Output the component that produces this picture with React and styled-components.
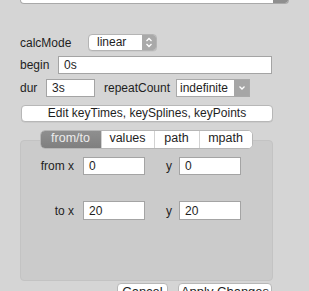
import React from 'react';
import styled, { createGlobalStyle } from 'styled-components';

const GlobalStyle = createGlobalStyle`
  html, body {
    margin: 0;
    padding: 0;
    background: #d5d5d5;
    font-family: "Liberation Sans", Arial, sans-serif;
    font-size: 12px;
    color: #1e1e1e;
    overflow: hidden;
  }
`;

const Page = styled.div`
  width: 309px;
  height: 291px;
  padding-left: 20px;
  box-sizing: border-box;
`;

const TopSelect = styled.div`
  display: flex;
  width: 269px;
  height: 4px;
  box-sizing: border-box;
  border: 1px solid #a9a9a9;
  border-top: none;
  border-radius: 0 0 5px 5px;
  background: #fff;
  overflow: hidden;
`;

const TopCap = styled.div`
  margin-left: auto;
  width: 15px;
  background: #8f8f8f;
`;

const Row = styled.div`
  display: flex;
  align-items: center;
  margin-top: ${(p) => p.$top || 0}px;
  height: ${(p) => p.$h || 18}px;
`;

const Label = styled.span`
  width: ${(p) => (p.$w ? `${p.$w}px` : 'auto')};
  margin-left: ${(p) => p.$before ?? 0}px;
  margin-right: ${(p) => p.$gap ?? 0}px;
  text-align: ${(p) => p.$align || 'left'};
  white-space: nowrap;
`;

const Input = styled.div`
  box-sizing: border-box;
  width: ${(p) => p.$w}px;
  height: ${(p) => p.$h || 18}px;
  border: 1px solid #a4a4a4;
  background: #fff;
  padding: 0 5px;
  display: flex;
  align-items: center;
  font-size: 12px;
`;

const PopUp = styled.div`
  box-sizing: border-box;
  width: 69px;
  height: 17px;
  display: flex;
  border: 1px solid #b4b4b4;
  border-radius: 4px;
  background: #fff;
  overflow: hidden;
  box-shadow: 0 0.5px 0 rgba(0, 0, 0, 0.08);
`;

const PopUpText = styled.span`
  flex: 1;
  padding-left: 8px;
  line-height: 15px;
`;

const Arrows = styled.div`
  width: 14px;
  background: #a9a9a9;
  display: flex;
  align-items: center;
  justify-content: center;
`;

const Combo = styled.div`
  box-sizing: border-box;
  width: 74px;
  height: 18px;
  display: flex;
  border: 1px solid #a9a9a9;
  background: #fff;
`;

const ComboText = styled.span`
  flex: 1;
  padding-left: 3px;
  line-height: 16px;
  white-space: nowrap;
  overflow: hidden;
`;

const ComboArrow = styled.div`
  width: 15px;
  flex-shrink: 0;
  background: #a6a6a6;
  display: flex;
  align-items: center;
  justify-content: center;
`;

const WideButton = styled.div`
  box-sizing: border-box;
  margin-top: 8px;
  width: 252px;
  margin-left: 1px;
  height: 17px;
  border: 1px solid #b7b7b7;
  border-radius: 4px;
  background: #fff;
  text-align: center;
  line-height: 15px;
  box-shadow: 0 0.5px 0 rgba(0, 0, 0, 0.1);
`;

const TabsBar = styled.div`
  position: relative;
  z-index: 1;
  margin-top: 8px;
  width: 253px;
  display: flex;
  justify-content: center;
`;

const Tabs = styled.div`
  display: flex;
  height: 17px;
  border: 1px solid #b6b6b6;
  border-radius: 5px;
  background: #fff;
  overflow: hidden;
  margin-left: -1px;
`;

const Tab = styled.div`
  box-sizing: border-box;
  width: ${(p) => p.$w}px;
  text-align: center;
  line-height: 15px;
  border-left: ${(p) => (p.$first ? 'none' : '1px solid #d2d2d2')};
  background: ${(p) => (p.$active ? 'linear-gradient(#8f8f8f, #7f7f7f)' : '#fff')};
  color: ${(p) => (p.$active ? '#ececec' : '#1e1e1e')};
  font-size: 12.5px;
`;

const GroupBox = styled.div`
  box-sizing: border-box;
  margin-top: -9px;
  width: 253px;
  height: 141px;
  border: 1px solid #c3c3c3;
  border-radius: 4px;
  background: #cbcbcb;
  padding-top: 16px;
`;

const Footer = styled.div`
  display: flex;
  justify-content: flex-end;
  gap: 10px;
  width: 252px;
  margin-top: 2px;
`;

const Button = styled.div`
  box-sizing: border-box;
  width: ${(p) => p.$w}px;
  height: 20px;
  border: 1px solid #b7b7b7;
  border-radius: 4px;
  background: #fff;
  text-align: center;
  line-height: 14px;
  padding-top: 1px;
  font-size: 13px;
`;

const StepperIcon = () => (
  <svg width="8" height="11" viewBox="0 0 8 11">
    <path d="M1.5 4 L4 1.5 L6.5 4 M1.5 7 L4 9.5 L6.5 7" fill="none" stroke="#fff" strokeWidth="1.3" />
  </svg>
);

const ChevronIcon = () => (
  <svg width="8" height="6" viewBox="0 0 8 6">
    <path d="M1.5 1.5 L4 4 L6.5 1.5" fill="none" stroke="#fff" strokeWidth="1.3" />
  </svg>
);

export default function App() {
  return (
    <Page>
      <GlobalStyle />
      <TopSelect>
        <TopCap />
      </TopSelect>

      <Row $top={30} $h={17}>
        <Label $w={68}>calcMode</Label>
        <PopUp>
          <PopUpText>linear</PopUpText>
          <Arrows>
            <StepperIcon />
          </Arrows>
        </PopUp>
      </Row>

      <Row $top={5}>
        <Label $w={38}>begin</Label>
        <Input $w={214}>0s</Input>
      </Row>

      <Row $top={5}>
        <Label $w={26}>dur</Label>
        <Input $w={49}>3s</Input>
        <Label $w={72} $before={9}>repeatCount</Label>
        <Combo>
          <ComboText>indefinite</ComboText>
          <ComboArrow>
            <ChevronIcon />
          </ComboArrow>
        </Combo>
      </Row>

      <WideButton>Edit keyTimes, keySplines, keyPoints</WideButton>

      <TabsBar>
        <Tabs>
          <Tab $w={60} $first $active>from/to</Tab>
          <Tab $w={53}>values</Tab>
          <Tab $w={45}>path</Tab>
          <Tab $w={53}>mpath</Tab>
        </Tabs>
      </TabsBar>

      <GroupBox>
        <Row>
          <Label $w={53} $gap={9} $align="right">from x</Label>
          <Input $w={62}>0</Input>
          <Label $w={27} $gap={7} $align="right">y</Label>
          <Input $w={62}>0</Input>
        </Row>
        <Row $top={26} $h={19}>
          <Label $w={53} $gap={9} $align="right">to x</Label>
          <Input $w={62} $h={19}>20</Input>
          <Label $w={27} $gap={7} $align="right">y</Label>
          <Input $w={62} $h={19}>20</Input>
        </Row>
      </GroupBox>

      <Footer>
        <Button $w={51}>Cancel</Button>
        <Button $w={94}>Apply Changes</Button>
      </Footer>
    </Page>
  );
}
